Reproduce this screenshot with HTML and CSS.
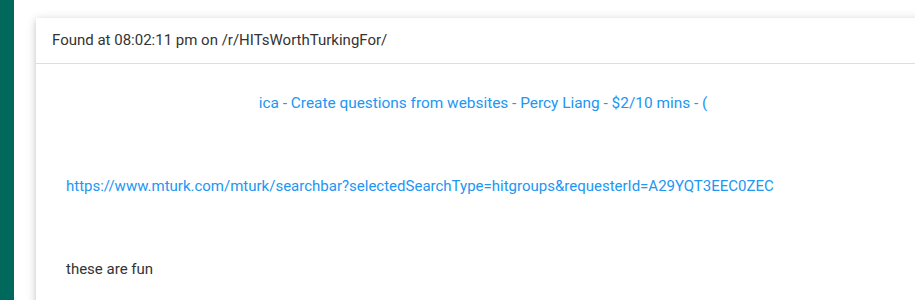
FILE: index.html
```html
<!DOCTYPE html>
<html>
<head>
<meta charset="utf-8">
<link rel="stylesheet" href="styles.css">
</head>
<body>
<div class="page">
  <aside class="rail"></aside>
  <main class="main">
    <section class="card">
      <header class="card-head">Found at 08:02:11 pm on /r/HITsWorthTurkingFor/</header>
      <div class="card-body">
        <p class="title"><a href="#">ica - Create questions from websites - Percy Liang - $2/10 mins - (</a></p>
        <p class="link"><a href="#">https://www.mturk.com/mturk/searchbar?selectedSearchType=hitgroups&amp;requesterId=A29YQT3EEC0ZEC</a></p>
        <p class="note">these are fun</p>
      </div>
    </section>
  </main>
</div>
</body>
</html>
```

FILE: styles.css
```css
html, body {
  margin: 0;
  padding: 0;
  background: #fff;
  overflow: hidden;
}
body {
  font-family: Roboto, "Liberation Sans", sans-serif;
  font-size: 15px;
  color: #333;
}
.page {
  display: flex;
  width: 960px;
  height: 300px;
}
.rail {
  width: 14px;
  flex: none;
  background: #00695c;
}
.main {
  flex: none;
  padding: 18px 0 0 22px;
}
.card {
  width: 894px;
  height: 400px;
  background: #fff;
  box-shadow: 0 2px 10px rgba(0,0,0,0.16), 0 2px 5px rgba(0,0,0,0.10);
}
.card-head {
  height: 46px;
  box-sizing: border-box;
  padding: 12px 16px 0;
  line-height: 20px;
  border-bottom: 1px solid #dedede;
}
.card-body {
  padding: 0 30px;
}
.card-body p {
  margin: 0;
  line-height: 20px;
}
.card-body a {
  color: #2196f3;
  text-decoration: none;
}
.title {
  text-align: center;
  padding-top: 29px;
  font-size: 15.4px;
}
.link {
  padding-top: 63px;
}
.note {
  padding-top: 63px;
}
```
